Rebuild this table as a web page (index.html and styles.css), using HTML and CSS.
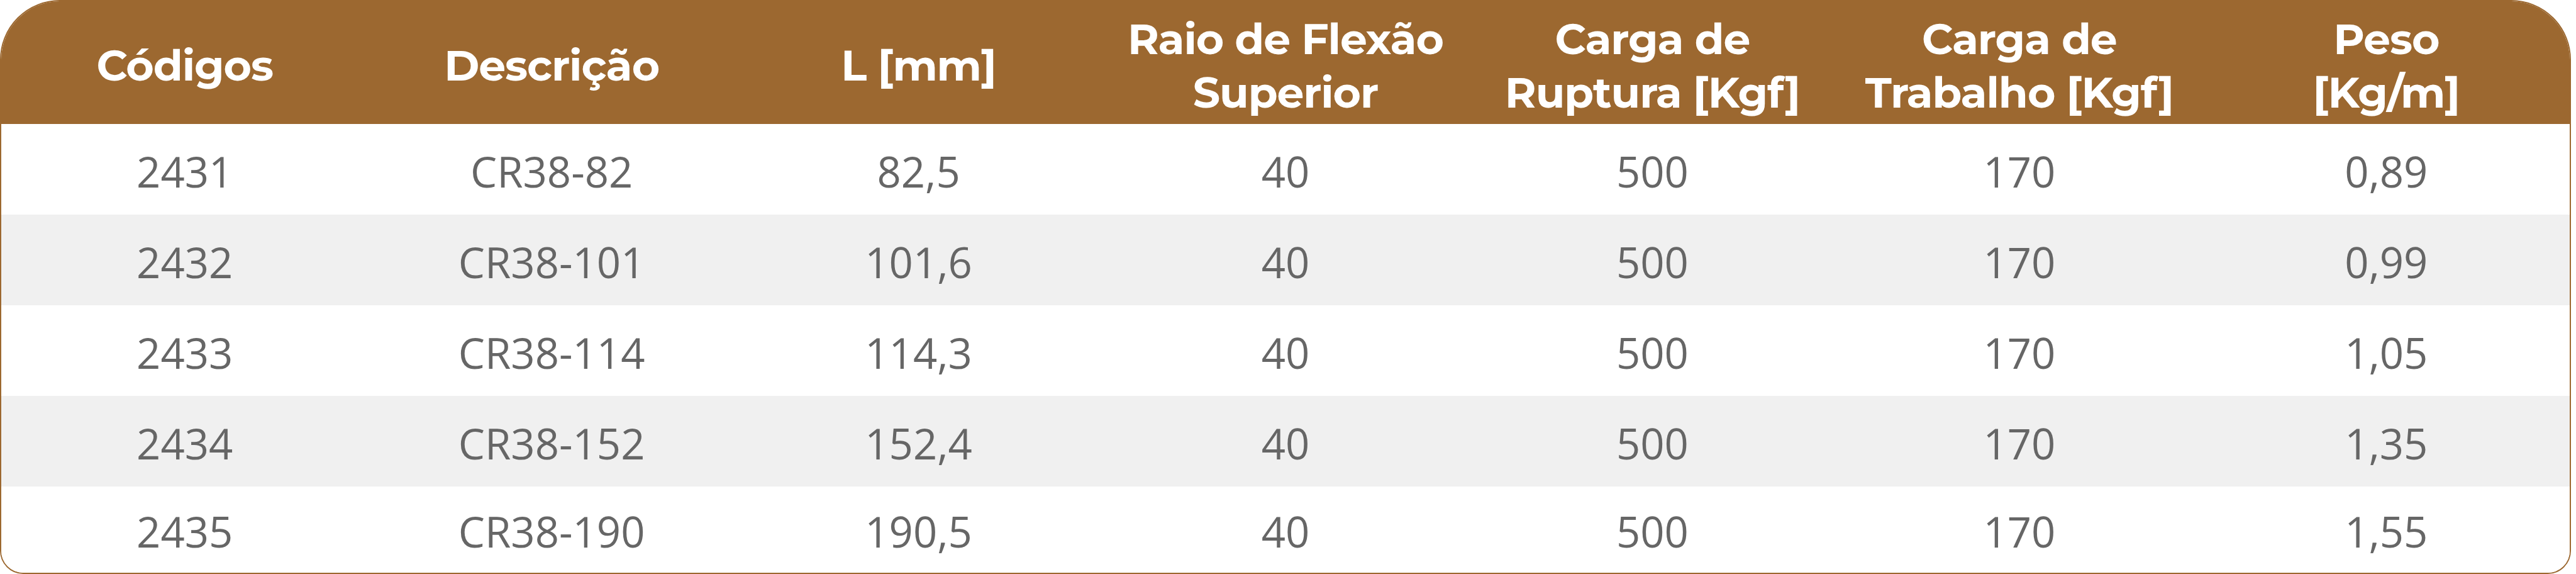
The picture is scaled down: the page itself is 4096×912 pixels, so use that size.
FILE: index.html
```html
<!DOCTYPE html>
<html lang="pt-BR">
<head>
<meta charset="utf-8">
<title>Tabela CR38</title>
<link rel="stylesheet" href="styles.css">
</head>
<body>
<div class="table">
  <div class="row head">
    <div class="cell">Códigos</div>
    <div class="cell">Descrição</div>
    <div class="cell">L [mm]</div>
    <div class="cell">Raio de Flexão<br>Superior</div>
    <div class="cell">Carga de<br>Ruptura [Kgf]</div>
    <div class="cell">Carga de<br>Trabalho [Kgf]</div>
    <div class="cell">Peso<br>[Kg/m]</div>
  </div>
  <div class="row">
    <div class="cell">2431</div><div class="cell">CR38-82</div><div class="cell">82,5</div><div class="cell">40</div><div class="cell">500</div><div class="cell">170</div><div class="cell">0,89</div>
  </div>
  <div class="row alt">
    <div class="cell">2432</div><div class="cell">CR38-101</div><div class="cell">101,6</div><div class="cell">40</div><div class="cell">500</div><div class="cell">170</div><div class="cell">0,99</div>
  </div>
  <div class="row">
    <div class="cell">2433</div><div class="cell">CR38-114</div><div class="cell">114,3</div><div class="cell">40</div><div class="cell">500</div><div class="cell">170</div><div class="cell">1,05</div>
  </div>
  <div class="row alt">
    <div class="cell">2434</div><div class="cell">CR38-152</div><div class="cell">152,4</div><div class="cell">40</div><div class="cell">500</div><div class="cell">170</div><div class="cell">1,35</div>
  </div>
  <div class="row last">
    <div class="cell">2435</div><div class="cell">CR38-190</div><div class="cell">190,5</div><div class="cell">40</div><div class="cell">500</div><div class="cell">170</div><div class="cell">1,55</div>
  </div>
</div>
</body>
</html>
```
FILE: styles.css
```css
html, body {
  margin: 0;
  padding: 0;
  background: #ffffff;
}

.table {
  box-sizing: border-box;
  width: 4088px;
  height: 912px;
  border: 2px solid #9c6830;
  border-radius: 95px 95px 37px 37px;
  overflow: hidden;
  display: grid;
  grid-template-rows: 195px repeat(4, 144px) 1fr;
  background: #ffffff;
}

.row {
  display: grid;
  grid-template-columns: repeat(7, 1fr);
  font-family: "Open Sans", "Liberation Sans", sans-serif;
  font-size: 67px;
  color: #666666;
  background: #ffffff;
}

.row.alt {
  background: #f0f0f0;
}

.cell {
  display: flex;
  align-items: center;
  justify-content: center;
  text-align: center;
  padding-top: 5px;
  white-space: nowrap;
}

.row.head {
  background: #9c6830;
  color: #ffffff;
  font-family: "Montserrat", "Inter", "Liberation Sans", sans-serif;
  font-weight: 700;
  font-size: 68px;
  line-height: 85px;
  letter-spacing: -1.1px;
}

.row.head .cell {
  padding-top: 8px;
}
```
